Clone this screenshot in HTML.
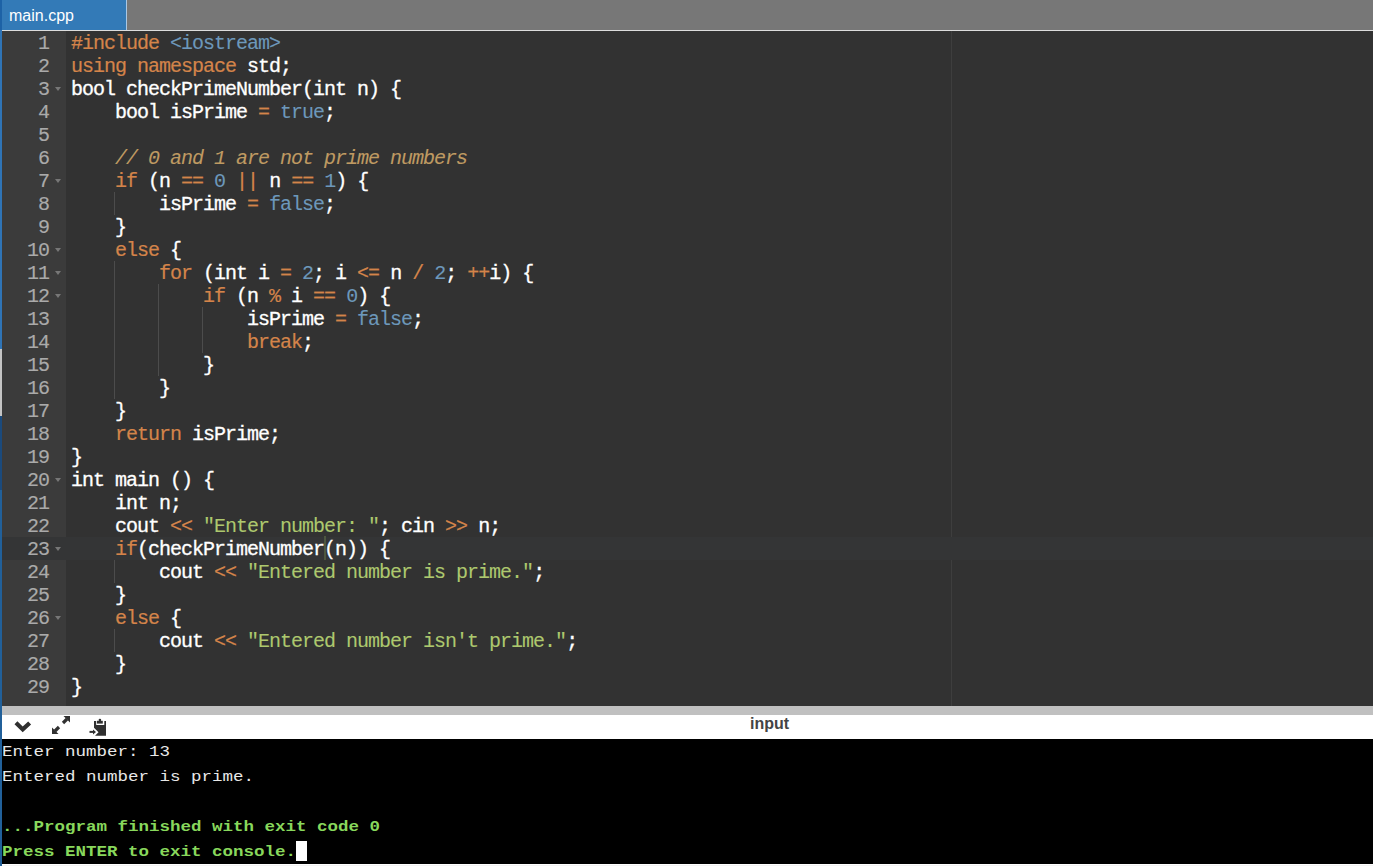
<!DOCTYPE html><html><head><meta charset="utf-8"><style>*{margin:0;padding:0;box-sizing:border-box}
html,body{width:1373px;height:866px;overflow:hidden;background:#323232}
body{position:relative;font-family:"Liberation Sans",sans-serif}
#strip{position:absolute;left:0;top:0;width:2px;height:866px;z-index:5;background:linear-gradient(to bottom,#1d62a6 0,#1d62a6 30px,#2f74b6 30px,#2f74b6 349px,#c4c4c4 349px,#c4c4c4 416px,#1b4a7c 416px,#1b4a7c 490px,#21609a 490px,#21609a 866px)}
#tabbar{position:absolute;left:0;top:0;width:1373px;height:31px;background:#777;border-bottom:1px solid #ddd}
#tab{position:absolute;left:2px;top:0;width:125px;height:30px;background:#337ab7;border-right:1px solid #a9c8e6;color:#fff;font-size:16px;line-height:32px;padding-left:7px}
#editor{position:absolute;left:2px;top:31px;width:1371px;height:675px;background:#323232;overflow:hidden;font-family:"Liberation Mono",monospace;font-size:20px;letter-spacing:-1px}
#gutter{position:absolute;left:0;top:0;width:64px;height:100%;background:#3b3b3b}
#pm{position:absolute;left:949px;top:0;width:1px;height:100%;background:#3e3e3e}
#active{position:absolute;left:0;width:100%;height:23px;background:#343536}
.ig{position:absolute;width:1px;height:23px;background:#4c4c4c}
.ln{position:absolute;left:0;width:47px;height:23px;line-height:25px;text-align:right;color:#aaa;-webkit-text-stroke:0.15px currentColor}
.fw{position:absolute;left:53px;width:0;height:0;margin-top:10px;border-left:3px solid transparent;border-right:3px solid transparent;border-top:4px solid #777}
.line{position:absolute;left:69px;height:23px;line-height:23px;padding-top:1px;color:#fff;white-space:pre;-webkit-text-stroke:0.3px currentColor}
.k{color:#d4844a;-webkit-text-stroke:0.2px currentColor}.c{color:#6d98bb;-webkit-text-stroke:0.1px currentColor}.s{color:#adc86e;-webkit-text-stroke:0.1px currentColor}.m{color:#bf9a62;font-style:italic;-webkit-text-stroke:0.1px currentColor}
#cursor{position:absolute;left:322px;top:505px;width:2px;height:24px;background:#4d573f}
#resizer{position:absolute;left:0;top:706px;width:1373px;height:9px;background:#c0c0c0}
#toolbar{position:absolute;left:0;top:715px;width:1373px;height:24px;background:#fff}


#tbsvg{position:absolute;left:0;top:0}
#inputlbl{position:absolute;left:750px;top:0;font-size:16px;line-height:17px;color:#444;font-weight:bold}
#console{position:absolute;left:2px;top:739px;width:1371px;height:125px;background:#000;font-family:"Liberation Mono",monospace;font-size:17.5px}
.cl{position:absolute;left:0;height:25px;line-height:25px;color:#e8e8e8;white-space:pre;transform:scaleY(0.87);transform-origin:0 16px}
.g{color:#88d85c;font-weight:bold}
#ccur{position:absolute;left:294px;top:102px;width:10.5px;height:19.5px;background:#fff}
#bottomline{position:absolute;left:0;top:864px;width:1373px;height:2px;background:linear-gradient(#fff 0,#fff 1px,#f3f3f3 1px)}
</style></head><body>
<div id="strip"></div>
<div id="tabbar"><div id="tab">main.cpp</div></div>
<div id="editor">
<div id="gutter"></div><div id="pm"></div>
<div id="active" style="top:506px"></div>
<div class="ig" style="left:112px;top:161px"></div>
<div class="ig" style="left:112px;top:230px"></div>
<div class="ig" style="left:112px;top:253px"></div>
<div class="ig" style="left:156px;top:253px"></div>
<div class="ig" style="left:112px;top:276px"></div>
<div class="ig" style="left:156px;top:276px"></div>
<div class="ig" style="left:200px;top:276px"></div>
<div class="ig" style="left:112px;top:299px"></div>
<div class="ig" style="left:156px;top:299px"></div>
<div class="ig" style="left:200px;top:299px"></div>
<div class="ig" style="left:112px;top:322px"></div>
<div class="ig" style="left:156px;top:322px"></div>
<div class="ig" style="left:112px;top:345px"></div>
<div class="ig" style="left:112px;top:529px"></div>
<div class="ig" style="left:112px;top:598px"></div>
<div class="ln" style="top:0px">1</div>
<div class="line" style="top:0px"><span class="k">#include</span> <span class="c">&lt;iostream&gt;</span></div>
<div class="ln" style="top:23px">2</div>
<div class="line" style="top:23px"><span class="k">using</span> <span class="k">namespace</span> std;</div>
<div class="ln" style="top:46px">3</div>
<div class="fw" style="top:46px"></div>
<div class="line" style="top:46px">bool checkPrimeNumber(int n) {</div>
<div class="ln" style="top:69px">4</div>
<div class="line" style="top:69px">    bool isPrime <span class="k">=</span> <span class="c">true</span>;</div>
<div class="ln" style="top:92px">5</div>
<div class="line" style="top:92px"></div>
<div class="ln" style="top:115px">6</div>
<div class="line" style="top:115px">    <span class="m">// 0 and 1 are not prime numbers</span></div>
<div class="ln" style="top:138px">7</div>
<div class="fw" style="top:138px"></div>
<div class="line" style="top:138px">    <span class="k">if</span> (n <span class="k">==</span> <span class="c">0</span> <span class="k">||</span> n <span class="k">==</span> <span class="c">1</span>) {</div>
<div class="ln" style="top:161px">8</div>
<div class="line" style="top:161px">        isPrime <span class="k">=</span> <span class="c">false</span>;</div>
<div class="ln" style="top:184px">9</div>
<div class="line" style="top:184px">    }</div>
<div class="ln" style="top:207px">10</div>
<div class="fw" style="top:207px"></div>
<div class="line" style="top:207px">    <span class="k">else</span> {</div>
<div class="ln" style="top:230px">11</div>
<div class="fw" style="top:230px"></div>
<div class="line" style="top:230px">        <span class="k">for</span> (int i <span class="k">=</span> <span class="c">2</span>; i <span class="k">&lt;=</span> n <span class="k">/</span> <span class="c">2</span>; <span class="k">++</span>i) {</div>
<div class="ln" style="top:253px">12</div>
<div class="fw" style="top:253px"></div>
<div class="line" style="top:253px">            <span class="k">if</span> (n <span class="k">%</span> i <span class="k">==</span> <span class="c">0</span>) {</div>
<div class="ln" style="top:276px">13</div>
<div class="line" style="top:276px">                isPrime <span class="k">=</span> <span class="c">false</span>;</div>
<div class="ln" style="top:299px">14</div>
<div class="line" style="top:299px">                <span class="k">break</span>;</div>
<div class="ln" style="top:322px">15</div>
<div class="line" style="top:322px">            }</div>
<div class="ln" style="top:345px">16</div>
<div class="line" style="top:345px">        }</div>
<div class="ln" style="top:368px">17</div>
<div class="line" style="top:368px">    }</div>
<div class="ln" style="top:391px">18</div>
<div class="line" style="top:391px">    <span class="k">return</span> isPrime;</div>
<div class="ln" style="top:414px">19</div>
<div class="line" style="top:414px">}</div>
<div class="ln" style="top:437px">20</div>
<div class="fw" style="top:437px"></div>
<div class="line" style="top:437px">int main () {</div>
<div class="ln" style="top:460px">21</div>
<div class="line" style="top:460px">    int n;</div>
<div class="ln" style="top:483px">22</div>
<div class="line" style="top:483px">    cout <span class="k">&lt;&lt;</span> <span class="s">"Enter number: "</span>; cin <span class="k">&gt;&gt;</span> n;</div>
<div class="ln" style="top:506px">23</div>
<div class="fw" style="top:506px"></div>
<div class="line" style="top:506px">    <span class="k">if</span>(checkPrimeNumber(n)) {</div>
<div class="ln" style="top:529px">24</div>
<div class="line" style="top:529px">        cout <span class="k">&lt;&lt;</span> <span class="s">"Entered number is prime."</span>;</div>
<div class="ln" style="top:552px">25</div>
<div class="line" style="top:552px">    }</div>
<div class="ln" style="top:575px">26</div>
<div class="fw" style="top:575px"></div>
<div class="line" style="top:575px">    <span class="k">else</span> {</div>
<div class="ln" style="top:598px">27</div>
<div class="line" style="top:598px">        cout <span class="k">&lt;&lt;</span> <span class="s">"Entered number isn't prime."</span>;</div>
<div class="ln" style="top:621px">28</div>
<div class="line" style="top:621px">    }</div>
<div class="ln" style="top:644px">29</div>
<div class="line" style="top:644px">}</div>
<div id="cursor"></div>
</div>
<div id="resizer"></div>
<div id="toolbar"><svg id="tbsvg" width="130" height="24" viewBox="0 0 130 24"><polygon points="14.5,9.3 17.4,6.3 22.7,11.4 28.2,6.6 31.1,9.5 22.7,17.3" fill="#303030"/><polygon points="63.5,1 70,1 70,7.5" fill="#303030"/><line x1="67" y1="4" x2="63" y2="8" stroke="#303030" stroke-width="3.2"/><polygon points="52,12.5 52,19 58.5,19" fill="#303030"/><line x1="55" y1="16" x2="59" y2="12" stroke="#303030" stroke-width="3.2"/><polygon points="94,6 96.2,6 96.2,10 104.3,10 104.3,6 106,6 106,20.7 95,20.7 98.5,17.2 94,12.8" fill="#303030"/><rect x="97" y="5.8" width="5.8" height="2.8" fill="#303030"/><circle cx="99.9" cy="5" r="1.3" fill="#303030"/><line x1="89.5" y1="16.9" x2="94" y2="16.9" stroke="#303030" stroke-width="2"/><polygon points="93,14.5 96,17 93,19.5" fill="#303030"/></svg><div id="inputlbl">input</div></div>
<div id="console"><div class="cl" style="top:0">Enter number: 13</div><div class="cl" style="top:25px">Entered number is prime.</div><div class="cl g" style="top:75px">...Program finished with exit code 0</div><div class="cl g" style="top:100px">Press ENTER to exit console.</div><div id="ccur"></div></div>
<div id="bottomline"></div>
</body></html>
